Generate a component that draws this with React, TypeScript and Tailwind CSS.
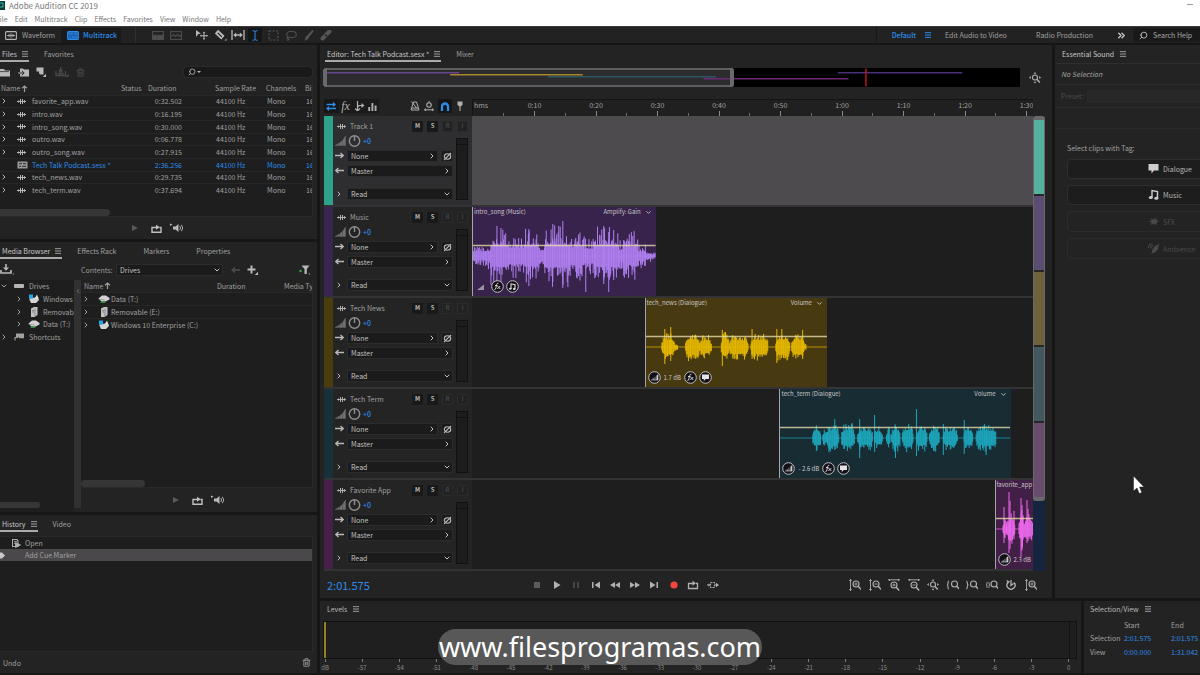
import type { ReactNode } from "react"
import { ChevronDown, ChevronLeft, ChevronRight, ChevronsRight, Menu, Search, Trash2 } from "lucide-react"

const SESSION = 156.256
const VIEW = 91.042
const PLAYHEAD = 121.575

const menus = ["File", "Edit", "Multitrack", "Clip", "Effects", "Favorites", "View", "Window", "Help"]

const files = [
  { name: "favorite_app.wav", duration: "0:32.502" },
  { name: "intro.wav", duration: "0:16.195" },
  { name: "intro_song.wav", duration: "0:30.000" },
  { name: "outro.wav", duration: "0:06.778" },
  { name: "outro_song.wav", duration: "0:27.915" },
  { name: "Tech Talk Podcast.sesx *", duration: "2:36.256", session: true },
  { name: "tech_news.wav", duration: "0:29.735" },
  { name: "tech_term.wav", duration: "0:37.694" },
]

type Burst = [start: number, end: number, amp: number]

type Clip = {
  name: string
  start: number
  length: number
  envelope: string
  gain?: string
  kind: "music" | "dialogue"
  bg: string
  wave: string
  width: number
  seed: number
  bursts: Burst[]
  spikes: [x: number, up: number, down: number][]
}

type Track = { name: string; strip: string; selected?: boolean; clip?: Clip }

const tracks: Track[] = [
  { name: "Track 1", strip: "bg-[#2fa38a]", selected: true },
  {
    name: "Music",
    strip: "bg-[#3a2450]",
    clip: {
      name: "intro_song (Music)",
      start: 0,
      length: 29.8,
      envelope: "Amplify: Gain",
      kind: "music",
      bg: "bg-[#37234b]",
      wave: "#b07ff0",
      width: 183,
      seed: 7,
      bursts: [
        [0, 12, 11], [12, 18, 14], [18, 36, 29], [36, 52, 23], [52, 66, 29], [66, 72, 15], [72, 96, 31],
        [96, 112, 25], [112, 122, 20], [122, 146, 30], [146, 151, 16], [151, 165, 25], [165, 173, 13],
        [173, 179, 7], [179, 183, 4],
      ],
      spikes: [[24, 30, 30], [28, 28, 34], [56, 27, 30], [80, 32, 26], [90, 35, 32], [113, 12, 36], [131, 30, 28], [136, 24, 36], [141, 26, 24]],
    },
  },
  {
    name: "Tech News",
    strip: "bg-[#4b3c0e]",
    clip: {
      name: "tech_news (Dialogue)",
      start: 28,
      length: 29.6,
      envelope: "Volume",
      gain: "1.7 dB",
      kind: "dialogue",
      bg: "bg-[#473a10]",
      wave: "#e6b800",
      width: 183,
      seed: 11,
      bursts: [[16, 29, 14], [29, 32, 6], [40, 54, 15], [54, 66, 12], [76, 84, 16], [84, 103, 13], [106, 123, 14], [131, 145, 15], [147, 160, 14], [160, 162, 5]],
      spikes: [[19, 18, 17], [25, 20, 14], [77, 17, 19], [107, 18, 12], [132, 18, 16], [137, 18, 10], [158, 17, 12]],
    },
  },
  {
    name: "Tech Term",
    strip: "bg-[#17303a]",
    clip: {
      name: "tech_term (Dialogue)",
      start: 49.9,
      length: 37.5,
      envelope: "Volume",
      gain: "- 2.6 dB",
      kind: "dialogue",
      bg: "bg-[#182c34]",
      wave: "#1ea8bd",
      width: 231,
      seed: 23,
      bursts: [
        [33, 41, 14], [43, 47, 12], [47, 59, 15], [62, 75, 15], [78, 93, 13], [95, 103, 12], [107, 111, 14],
        [112, 121, 15], [123, 134, 15], [137, 148, 14], [150, 160, 14], [164, 178, 13], [185, 194, 14], [197, 217, 14],
      ],
      spikes: [[55, 19, 12], [80, 19, 20], [95, 23, 14], [116, 12, 20], [137, 29, 18], [164, 14, 17], [185, 18, 16], [207, 12, 17]],
    },
  },
  {
    name: "Favorite App",
    strip: "bg-[#47204a]",
    clip: {
      name: "favorite_app",
      start: 84.8,
      length: 32.502,
      envelope: "",
      gain: "2.3 dB",
      kind: "dialogue",
      bg: "bg-[#421f47]",
      wave: "#ea68ea",
      width: 200,
      seed: 5,
      bursts: [[7, 11, 14], [11, 19, 16], [23, 28, 22], [28, 38, 15], [42, 60, 16], [66, 90, 14]],
      spikes: [[8, 22, 14], [13, 37, 24], [14, 28, 20], [18, 18, 10], [25, 31, 28], [26, 24, 20], [31, 29, 14], [32, 20, 12]],
    },
  },
]

const overview = [
  { start: 0, length: 30, y: 4, color: "#64478c" },
  { start: 28, length: 29.735, y: 6, color: "#a8872a" },
  { start: 49.9, length: 37.694, y: 8, color: "#2c5662" },
  { start: 84.8, length: 32.502, y: 10, color: "#6c2a74" },
  { start: 114.9, length: 27.915, y: 4, color: "#4a2f7c" },
]

// Small deterministic generator so that a clip always draws the same peaks
function random(seed: number) {
  let s = seed * 7919
  return () => {
    s = (s * 16807) % 2147483647
    return s / 2147483647
  }
}

function wavePath(clip: Clip) {
  const next = random(clip.seed)
  const core = clip.kind === "music" ? 0.36 : 0.5
  const power = clip.kind === "music" ? 3 : 2.2
  let d = ""
  for (const [from, to, amp] of clip.bursts) {
    for (let x = from; x < to; x += 0.7) {
      const edge = clip.kind === "dialogue" ? Math.min(1, 0.45 + Math.min(x - from, to - x) / 4) : 1
      const up = amp * edge * (core + (1 - core) * next() ** power)
      const down = amp * edge * (core + (1 - core) * next() ** power)
      d += `M${x.toFixed(1)} ${(49 - up).toFixed(1)}V${(49 + down).toFixed(1)}`
    }
  }
  for (const [x, up, down] of clip.spikes) d += `M${x} ${49 - up}V${49 + down}`
  return d
}

function Icon({ w = 12, h = 12, className = "", children }: { w?: number; h?: number; className?: string; children: ReactNode }) {
  return (
    <svg
      width={w}
      height={h}
      viewBox={`0 0 ${w} ${h}`}
      fill="none"
      stroke="currentColor"
      strokeWidth="1.1"
      className={`shrink-0 ${className}`}
      aria-hidden="true"
    >
      {children}
    </svg>
  )
}

function WaveIcon({ className = "" }: { className?: string }) {
  return (
    <Icon w={9} h={7} className={className}>
      <path d="M0 3.5h9M1.5 2.5v2M3.5 1v5M5.5 1v5M7.5 2.2v2.6" strokeWidth="1" />
    </Icon>
  )
}

function PanelMenu({ className = "" }: { className?: string }) {
  return (
    <button aria-label="Panel menu" className={className}>
      <Menu size={8} strokeWidth={3} />
    </button>
  )
}

function Tabs({ active, others = [] }: { active: string; others?: string[] }) {
  return (
    <div className="flex h-[17px] gap-[15px]">
      <div className="flex items-center gap-1 border-b-2 border-[#a9aaa9] pt-[2px] text-[#c8c8c8]">
        <button className="pl-[2px]">{active}</button>
        <PanelMenu className="text-[#9a9a9a]" />
      </div>
      <div className="flex gap-[27px]">
        {others.map((name) => (
          <button key={name}>{name}</button>
        ))}
      </div>
    </div>
  )
}

function PreviewControls({ className = "" }: { className?: string }) {
  return (
    <div className={`flex items-center ${className}`}>
      <button aria-label="Play" className="text-[#5a5a5a]">
        <Icon w={8} h={8}>
          <path d="M1 1l6 3-6 3z" fill="currentColor" stroke="none" />
        </Icon>
      </button>
      <button aria-label="Loop playback" className="ml-3 text-[#c0c0c0]">
        <LoopIcon />
      </button>
      <button aria-label="Auto-play" className="ml-2 text-[#b8b8b8]">
        <Icon w={14} h={10}>
          <path d="M3 3.5h2.5L8.5 1v8L5.5 6.5H3z" fill="currentColor" stroke="none" />
          <path d="M9.8 3q1.6 2 0 4M11.4 1.8q2.6 3.2 0 6.4" strokeWidth="0.9" />
          <path d="M0 0.5l2.5 1L0 3z" fill="currentColor" stroke="none" />
        </Icon>
      </button>
    </div>
  )
}

function LoopIcon() {
  return (
    <Icon w={11} h={9}>
      <path d="M2.5 3.5H1v4.8h9V3.5H8.5M2 3.5h4" strokeWidth="1.4" />
      <path d="M5 0.8l3.8 2.5L5 5.8z" fill="currentColor" stroke="none" />
    </Icon>
  )
}

function TitleBar() {
  return (
    <header className="overflow-hidden bg-white text-[#777777]">
      <div className="flex h-[11px] items-center text-[8px]">
        <Icon w={5} h={9}>
          <rect width="5" height="9" fill="#0d3b38" stroke="none" />
          <path d="M0 2h3v4H0" stroke="#2fb39c" />
        </Icon>
        <h1 className="ml-1 leading-[11px]">Adobe Audition CC 2019</h1>
        <button aria-label="Minimize" className="mr-[7px] ml-auto h-[3px] w-[6px] border-t border-[#9a9a9a]" />
      </div>
      <nav className="-ml-1 flex h-[15px] items-center gap-[7px]">
        {menus.map((m) => (
          <button key={m}>{m}</button>
        ))}
      </nav>
    </header>
  )
}

function Toolbar() {
  return (
    <div className="flex h-[17px] items-center overflow-hidden border-t border-[#3a3a3a] bg-[#222222]">
      <button className="ml-[5px] flex w-[56px] items-center gap-[5px]">
        <Icon w={12} h={9} className="text-[#b5b5b5]">
          <rect x="0.6" y="0.6" width="10.8" height="7.8" rx="1" />
          <path d="M2 4.5h8M4 3v3M6 2.2v4.6M8 3v3" strokeWidth="0.9" />
        </Icon>
        Waveform
      </button>
      <button className="flex h-[15px] w-[60px] items-center gap-[4px] bg-[#1a1a1a] pl-[6px] font-medium text-[#2d8ceb]">
        <Icon w={12} h={9}>
          <rect x="0.6" y="0.6" width="10.8" height="7.8" rx="1" fill="#1c5fa8" />
          <path d="M2 3h4M7 3h3M2 6h2M5 6h5" />
        </Icon>
        Multitrack
      </button>
      <div className="ml-[14px] h-full w-px bg-[#303030]" />
      <div className="ml-4 flex items-center gap-[6px] text-[#4d4d4d]">
        <button aria-label="Show spectral frequency display">
          <Icon w={12} h={9}>
            <rect x="0.6" y="0.6" width="10.8" height="7.8" />
            <path d="M1 5l2-1 2 1 2-1 2 1 2-1v4H1z" fill="currentColor" />
          </Icon>
        </button>
        <button aria-label="Show spectral pitch display">
          <Icon w={12} h={9}>
            <rect x="0.6" y="0.6" width="10.8" height="7.8" />
            <path d="M1.5 5.5l2-2 2 2 2-2 2 2 1.5-1.5" />
          </Icon>
        </button>
      </div>
      <div className="ml-[13px] flex items-center text-[#b8b8b8]">
        <button aria-label="Move tool">
          <Icon w={13} h={12}>
            <path d="M1 1l5 3.8-2.7.3L1 8z" fill="currentColor" stroke="none" />
            <path d="M9 3.5v6.5M5.8 6.8h6.4" strokeWidth="1" />
            <path d="M9 2.5l1.3 1.5H7.7zM9 11l1.3-1.5H7.7zM4.8 6.8l1.5-1.3v2.6zM13 6.8l-1.5-1.3v2.6z" fill="currentColor" stroke="none" />
          </Icon>
        </button>
        <button aria-label="Razor selected clips tool" className="ml-[6px]">
          <Icon w={13} h={12}>
            <path d="M4 0.8l6.5 6-3.2 3.6-6.5-6z" fill="currentColor" stroke="none" />
            <path d="M3.8 4l4 3.8" stroke="#222222" />
            <path d="M12.5 9.5v2h-2z" fill="currentColor" stroke="none" />
          </Icon>
        </button>
        <button aria-label="Slip tool" className="ml-[4px]">
          <Icon w={14} h={12}>
            <path d="M1 1v10M13 1v10M4 6h6" strokeWidth="1.3" />
            <path d="M2.2 6l3-2.5v5zM11.8 6l-3-2.5v5z" fill="currentColor" stroke="none" />
          </Icon>
        </button>
        <button aria-label="Time selection tool" className="ml-[3px] flex h-[14px] w-[14px] items-center justify-center bg-[#161616] text-[#2d8ceb]">
          <Icon w={6} h={11}>
            <path d="M0.5 0.8H2L3 1.6 4 0.8h1.5M0.5 10.2H2L3 9.4l1 .8h1.5M3 1.5v8" strokeWidth="1" />
          </Icon>
        </button>
      </div>
      <div className="ml-[6px] flex items-center gap-[6px] text-[#555555]">
        <button aria-label="Marquee selection tool">
          <Icon w={11} h={11}>
            <rect x="1" y="1" width="9" height="9" strokeDasharray="2 1.5" />
          </Icon>
        </button>
        <button aria-label="Lasso selection tool">
          <Icon w={12} h={11}>
            <ellipse cx="6.5" cy="4.5" rx="4.8" ry="3.3" />
            <path d="M3 6.8q-1.8 1 0 2t-1 1.5" />
          </Icon>
        </button>
        <button aria-label="Paintbrush selection tool">
          <Icon w={11} h={11}>
            <path d="M10 0.5L5 6.5" strokeWidth="2" />
            <path d="M4.5 5.5l1.8 1.6q-.8 3-5.3 3.4 1.5-1 1.5-3t2-2z" fill="currentColor" stroke="none" />
          </Icon>
        </button>
        <button aria-label="Spot healing brush tool">
          <Icon w={12} h={11}>
            <path d="M9.5 1.5l-7 7" strokeWidth="4" strokeLinecap="round" />
            <path d="M5 4.5l2 2" stroke="#222222" />
          </Icon>
        </button>
      </div>
      <div className="ml-auto h-full w-px bg-[#181818]" />
      <button className="ml-[15px] font-medium text-[#2d8ceb]">Default</button>
      <PanelMenu className="ml-[8px] w-[9px] text-[#2d8ceb]" />
      <button className="ml-[12px] w-[63px] whitespace-nowrap text-left">Edit Audio to Video</button>
      <button className="ml-[28px] w-[58px] whitespace-nowrap text-left">Radio Production</button>
      <button aria-label="More workspaces" className="ml-[22px] text-[#c8c8c8]">
        <ChevronsRight size={11} strokeWidth={3} />
      </button>
      <label className="ml-[6px] flex h-[14px] w-[67px] items-center gap-[5px] border border-[#1c1c1c] bg-[#191919] pl-[5px] text-[#b8b8b8]">
        <Search size={9} strokeWidth={2.5} className="shrink-0 -scale-x-100" />
        <input aria-label="Search Help" placeholder="Search Help" className="w-full min-w-0 bg-transparent outline-none placeholder:text-[#a8a8a8]" />
      </label>
    </div>
  )
}

function FilesPanel() {
  return (
    <section className="flex h-[194px] flex-col bg-[#232323]">
      <Tabs active="Files" others={["Favorites"]} />
      <div className="flex h-5 items-center text-[#b8b8b8]">
        <button aria-label="Open file">
          <Icon w={11} h={9}>
            <path d="M0 1h4l1 1.5h5V8.5H0z" fill="currentColor" stroke="none" />
            <path d="M0 3.6h9" stroke="#232323" strokeWidth="0.7" />
          </Icon>
        </button>
        <button aria-label="Import file" className="ml-[7px]">
          <Icon w={12} h={9}>
            <path d="M2 0.5h3l1 1h5v7H2z" fill="currentColor" stroke="none" />
            <path d="M0 5h5.5M3.8 2.8L6.2 5 3.8 7.2" stroke="#232323" strokeWidth="1" />
            <path d="M0 5h2" />
          </Icon>
        </button>
        <button aria-label="New file" className="ml-[6px]">
          <Icon w={12} h={10}>
            <path d="M0.5 0.5h7v7h-3L3 6.5V4.5H0.5z" fill="currentColor" stroke="none" />
            <path d="M9.5 8v1.5H8z" fill="currentColor" />
          </Icon>
        </button>
        <button aria-label="Insert into multitrack session" className="ml-[7px] text-[#4a4a4a]">
          <Icon w={14} h={10}>
            <path d="M1 4v4.5h9.5V4M5.7 0v4M3.7 2.8l2 2.2 2-2.2M3 6.5h5.5" strokeWidth="1.3" />
            <path d="M13 8v1.5h-1.5z" fill="currentColor" />
          </Icon>
        </button>
        <button aria-label="Close selected files" className="ml-[7px] text-[#454545]">
          <Trash2 size={9} strokeWidth={3} />
        </button>
        <label className="mr-1 ml-auto flex h-3 w-[130px] items-center rounded-sm border border-[#2a2a2a] bg-[#191919] pl-1 text-[#b8b8b8]">
          <Search size={8} strokeWidth={2.5} className="shrink-0 -scale-x-100" />
          <span className="ml-[1px] h-0 w-0 border-x-2 border-t-2 border-x-transparent border-t-[#b8b8b8]" />
          <input aria-label="Search files" className="w-full min-w-0 bg-transparent outline-none" />
        </label>
      </div>
      <div className="mr-1 flex flex-1 flex-col overflow-hidden border-r border-b border-[#2a2a2a] bg-[#1e1e1e]">
        <table className="h-[114px] w-full table-fixed border-collapse text-left whitespace-nowrap">
          <colgroup>
            <col />
            <col className="w-[27px]" />
            <col className="w-[67px]" />
            <col className="w-[51px]" />
            <col className="w-[39px]" />
            <col className="w-[7px]" />
          </colgroup>
          <thead className="bg-[#222222]">
            <tr className="h-[13px]">
              <th className="p-0 font-normal">
                <span className="flex items-center pl-px">
                  Name
                  <SortArrow />
                </span>
              </th>
              <th className="p-0 font-normal">Status</th>
              <th className="p-0 font-normal">Duration</th>
              <th className="p-0 font-normal">Sample Rate</th>
              <th className="p-0 font-normal">Channels</th>
              <th className="overflow-hidden p-0 font-normal">Bit</th>
            </tr>
          </thead>
          <tbody>
            {files.map((f) => (
              <tr key={f.name} className={f.session ? "border-t border-[#272727] text-[#2d8ceb]" : "border-t border-[#272727]"}>
                <td className="p-0">
                  <span className="flex items-center">
                    <span className="w-[17px]">
                      {!f.session && <ChevronRight size={8} strokeWidth={3} className="text-[#b8b8b8]" />}
                    </span>
                    <span className="w-[15px]">{f.session ? <SessionIcon /> : <WaveIcon className="text-[#b8b8b8]" />}</span>
                    {f.name}
                  </span>
                </td>
                <td className="p-0" />
                <td className="p-0 pr-[33px] text-right">{f.duration}</td>
                <td className="p-0 pl-px">44100 Hz</td>
                <td className="p-0 pl-px">Mono</td>
                <td className="overflow-hidden p-0 pl-px">16</td>
              </tr>
            ))}
          </tbody>
        </table>
        <div className="mt-auto h-[7px] w-[110px] rounded-r-full bg-[#363636]" />
      </div>
      <PreviewControls className="h-[22px] pl-[131px]" />
    </section>
  )
}

function SortArrow() {
  return (
    <Icon w={7} h={7} className="ml-[1px]">
      <path d="M3.5 7V1.5M1 3.2L3.5 1 6 3.2" strokeWidth="1.2" />
    </Icon>
  )
}

function SessionIcon() {
  return (
    <Icon w={11} h={8} className="text-[#9a9a9a]">
      <rect x="0.5" y="0.5" width="10" height="7" rx="0.5" fill="currentColor" stroke="none" />
      <path d="M2 2.7h3M6 2.7h3M2 5.3h2M5 5.3h4" stroke="#1e1e1e" strokeWidth="0.9" />
    </Icon>
  )
}

function DriveIcon({ kind }: { kind: string }) {
  if (kind === "windows") {
    return (
      <Icon w={12} h={9}>
        <path d="M1 4.5l9-1.5 1 3-3 3H3z" fill="#d5d5d5" stroke="none" />
        <path d="M1 0.5h4v4H1z" fill="#22a7e8" stroke="none" />
        <path d="M7 4l2-3.5 1.5 4" fill="#e8e8e8" stroke="none" />
      </Icon>
    )
  }
  if (kind === "removable") {
    return (
      <Icon w={12} h={10}>
        <path d="M3 1.5L6 0h3.5v8L6.5 10H3z" fill="#c4c4c4" stroke="none" />
        <path d="M4 3.5h2M4 5h2M7 1.5v8" stroke="#777777" strokeWidth="0.8" />
      </Icon>
    )
  }
  return (
    <Icon w={12} h={8}>
      <path d="M0.5 3.5L4 0.5h4L11.5 3v1.5L7.5 6.5h-4z" fill="#d2d2d2" stroke="none" />
      <path d="M2.5 7.2h5" stroke="#3da24a" strokeWidth="1.2" />
      <path d="M0.5 4.2l6 .6" stroke="#8a8a8a" strokeWidth="0.7" />
    </Icon>
  )
}

const tree = [
  { name: "Windows 10 Enterprise (C:)", kind: "windows" },
  { name: "Removable (E:)", kind: "removable" },
  { name: "Data (T:)", kind: "data" },
]

function MediaBrowser() {
  return (
    <section className="flex h-[270px] flex-col bg-[#232323]">
      <Tabs active="Media Browser" others={["Effects Rack", "Markers", "Properties"]} />
      <div className="flex h-[21px] items-center text-[#b8b8b8]">
        <button aria-label="Import from drive">
          <Icon w={15} h={11}>
            <path d="M6 0v4.5" strokeWidth="1.6" />
            <path d="M3 3.5h6L6 6.8z" fill="currentColor" stroke="none" />
            <path d="M1 6v3h10V6" strokeWidth="1.7" />
            <path d="M14 9v1.5h-1.5z" fill="currentColor" stroke="none" />
          </Icon>
        </button>
        <label className="ml-[66px] flex items-center text-[#9a9a9a]">
          <span className="w-[35px]">Contents:</span>
          <Dropdown label="Contents" value="Drives" className="w-[107px]" />
        </label>
        <button aria-label="Back" className="ml-[8px] text-[#4a4a4a]">
          <Icon w={9} h={8}>
            <path d="M2 4h7" strokeWidth="1.8" />
            <path d="M0 4l4-3.5v7z" fill="currentColor" stroke="none" />
          </Icon>
        </button>
        <button aria-label="Add shortcut" className="ml-[7px]">
          <Icon w={12} h={10}>
            <path d="M4.5 0.5v8M0.5 4.5h8" strokeWidth="2" />
            <path d="M10.5 8v1.5H9z" fill="currentColor" />
          </Icon>
        </button>
        <button aria-label="Filter" className="mr-[6px] ml-auto">
          <Icon w={12} h={10}>
            <path d="M2.5 0.5h8L7.8 4v5H5.5V4z" fill="currentColor" stroke="none" />
            <circle cx="1.5" cy="6" r="1.3" fill="#32a243" stroke="none" />
            <path d="M11 8v1.5H9.5z" fill="currentColor" stroke="none" />
          </Icon>
        </button>
      </div>
      <div className="flex flex-1">
        <div className="flex w-[74px] flex-col overflow-hidden bg-[#1e1e1e] whitespace-nowrap">
          <ul className="flex h-[63px] flex-col justify-between">
            <li className="flex h-3 items-center">
              <ChevronDown size={8} strokeWidth={3} className="mr-[6px]" />
              <span className="mr-[5px] h-1 w-[10px] shrink-0 rounded-[1px] bg-[#b5b5b5]" />
              Drives
            </li>
            {tree.map((d) => (
              <li key={d.name} className="flex h-3 items-center pl-[15px]">
                <ChevronRight size={8} strokeWidth={3} className="mr-[5px] shrink-0" />
                <span className="mr-[3px] flex">
                  <DriveIcon kind={d.kind} />
                </span>
                {d.name}
              </li>
            ))}
            <li className="flex h-3 items-center">
              <ChevronRight size={8} strokeWidth={3} className="mr-[6px]" />
              <Icon w={10} h={8} className="mr-[5px]">
                <path d="M2 0.5h8v4.8H5v-1H2z" fill="currentColor" stroke="none" />
                <path d="M1 7.5V4.5h3" />
              </Icon>
              Shortcuts
            </li>
          </ul>
          <div className="mt-auto mb-1 h-[6px] w-10 rounded-r-full bg-[#363636]" />
        </div>
        <div className="mb-1 flex w-[7px] flex-col items-center bg-[#313131] pt-2 text-[#8a8a8a]">
          <ChevronLeft size={6} strokeWidth={3} />
        </div>
        <div className="mr-1 flex flex-1 flex-col">
          <div className="flex flex-1 flex-col overflow-hidden border-r border-b border-[#2a2a2a] bg-[#1e1e1e]">
            <table className="w-full table-fixed border-collapse text-left whitespace-nowrap">
              <colgroup>
                <col />
                <col className="w-[67px]" />
                <col className="w-[28px]" />
              </colgroup>
              <thead className="bg-[#222222]">
                <tr className="h-3">
                  <th className="p-0 pl-[3px] font-normal">
                    <span className="flex items-center">
                      Name
                      <SortArrow />
                    </span>
                  </th>
                  <th className="p-0 font-normal">Duration</th>
                  <th className="overflow-hidden p-0 font-normal">Media Type</th>
                </tr>
              </thead>
              <tbody>
                {[...tree].sort((a, b) => a.name.localeCompare(b.name)).map((d) => (
                  <tr key={d.name} className="h-[13px] border-t border-[#272727]">
                    <td className="p-0" colSpan={3}>
                      <span className="flex h-[11px] items-center">
                        <ChevronRight size={8} strokeWidth={3} className="mr-2 ml-[1px]" />
                        <span className="mr-px flex">
                          <DriveIcon kind={d.kind} />
                        </span>
                        {d.name}
                      </span>
                    </td>
                  </tr>
                ))}
              </tbody>
            </table>
            <div className="mt-auto h-[7px] w-16 rounded-full bg-[#363636]" />
          </div>
          <PreviewControls className="h-[24px] pl-[91px]" />
        </div>
      </div>
    </section>
  )
}

function HistoryPanel() {
  return (
    <section className="flex flex-1 flex-col bg-[#232323]">
      <Tabs active="History" others={["Video"]} />
      <ul className="mt-[4px] mr-1 flex-1 border border-l-0 border-[#2a2a2a] bg-[#1e1e1e]">
        <li className="flex h-3 items-center">
          <Icon w={9} h={9} className="mr-[4px] ml-3 text-[#b0b0b0]">
            <path d="M0.5 0.5h4.5l1 1.5v5.5H0.5z" />
            <path d="M2 2.5h3M2 4.5h2M3.5 3.5l5 2.5-5 2.5z" fill="currentColor" strokeWidth="0.8" />
          </Icon>
          Open
        </li>
        <li className="flex h-3 items-center bg-[#4a484b]">
          <Icon w={5} h={7} className="mr-5 text-[#c8c8c8]">
            <path d="M0 0.5h2l3 3-3 3H0z" fill="currentColor" stroke="none" />
          </Icon>
          Add Cue Marker
        </li>
      </ul>
      <div className="flex h-[21px] items-center justify-between pr-[6px] pl-[3px]">
        <span>Undo</span>
        <button aria-label="Delete history" className="text-[#8a8a8a]">
          <Trash2 size={9} strokeWidth={3} />
        </button>
      </div>
    </section>
  )
}

function Dropdown({ label, value, side, className }: { label: string; value: string; side?: boolean; className?: string }) {
  return (
    <span className={`relative flex h-3 items-center border border-[#2b2b2b] bg-[#1b1b1b] text-[#c0c0c0] ${className}`}>
      <select aria-label={label} className="h-full w-full appearance-none bg-transparent pl-[3px] leading-[10px] outline-none">
        <option>{value}</option>
      </select>
      <span className="pointer-events-none absolute right-px">
        {side ? <ChevronRight size={8} strokeWidth={3} /> : <ChevronDown size={8} strokeWidth={3} />}
      </span>
    </span>
  )
}

function TrackHeader({ track }: { track: Track }) {
  return (
    <div className={`flex w-[148px] shrink-0 ${track.selected ? "bg-[#2e2e30]" : "bg-[#242424]"}`}>
      <div className={`w-[9px] shrink-0 ${track.strip}`} />
      <div className="flex flex-1 flex-col pt-1 pr-1 pl-[2px]">
        <div className="flex h-3 items-center">
          <WaveIcon className="ml-[2px] text-[#b0b0b0]" />
          <span className="ml-1 flex-1 whitespace-nowrap">{track.name}</span>
          <div className="flex gap-1 text-[6px] font-bold">
            {["M", "S", "R", "I"].map((b, i) => (
              <button
                key={b}
                className={
                  i < 2
                    ? "flex h-[11px] w-[11px] items-center justify-center rounded-[1px] bg-[#191919] text-[#bcbcbc]"
                    : "flex h-[11px] w-[11px] items-center justify-center rounded-[1px] border border-[#2b2b2b] bg-[#222222] text-[#434343]"
                }
              >
                {b}
              </button>
            ))}
          </div>
        </div>
        <div className="flex pt-[3px]">
          <div className="flex flex-1 flex-col gap-[3px]">
            <div className="flex h-3 items-center">
              <Icon w={11} h={10} className="text-[#707070]">
                <path d="M0 9.5L2 8.5v1zM2.5 9.5V8l2-1v2.5zM5 9.5V6.5l2-1.5v4.5zM7.5 9.5V4.5L10.5 0v9.5z" fill="currentColor" strokeWidth="0.4" />
              </Icon>
              <Icon w={13} h={12} className="ml-[2px] text-[#8f8f8f]">
                <circle cx="6.5" cy="6" r="5.2" strokeWidth="1.4" />
                <path d="M6.5 1v5" strokeWidth="1.4" />
              </Icon>
              <span className="ml-[2px] font-medium text-[#2d8ceb]">+0</span>
            </div>
            <div className="flex items-center text-[#b8b8b8]">
              <Icon w={9} h={8} className="mr-[3px]">
                <path d="M0 3.5h8M5.5 1L8.3 3.5 5.5 6" strokeWidth="1.3" />
              </Icon>
              <Dropdown label={`${track.name} input`} value="None" side className="flex-1" />
              <button aria-label="Reverse polarity" className="ml-[3px] flex h-3 w-3 items-center justify-center border border-[#2b2b2b] bg-[#1b1b1b]">
                <Icon w={9} h={9}>
                  <ellipse cx="4.5" cy="4.5" rx="3.2" ry="2.7" />
                  <path d="M1 8l7-7" />
                </Icon>
              </button>
            </div>
            <div className="flex items-center text-[#b8b8b8]">
              <Icon w={9} h={8} className="mr-[3px]">
                <path d="M9 3.5H1M3.5 1L0.7 3.5 3.5 6" strokeWidth="1.3" />
              </Icon>
              <Dropdown label={`${track.name} output`} value="Master" side className="flex-1" />
            </div>
            <div className="mt-2 flex items-center text-[#b8b8b8]">
              <button aria-label="Show automation lanes" className="mr-1 w-2">
                <ChevronRight size={8} strokeWidth={3} />
              </button>
              <Dropdown label={`${track.name} automation mode`} value="Read" className="flex-1" />
            </div>
          </div>
          <div className="mt-[3px] ml-[3px] w-[12px] border border-[#111111] bg-[#1d1d1d]">
            <div className="h-[6px] border-b border-[#111111]" />
          </div>
        </div>
      </div>
    </div>
  )
}

function Badge({ children }: { children: ReactNode }) {
  return (
    <svg width="13" height="13" viewBox="0 0 13 13" fill="none" stroke="#e4e4e4" className="shrink-0" aria-hidden="true">
      <circle cx="6.5" cy="6.5" r="5.8" fill="#141018" stroke="#c0bfc2" />
      {children}
    </svg>
  )
}

const LEVELS = "M3 9h7V3.5L8.8 4.8v4M7 5.8v3M5.2 7v2"

function ClipView({ clip }: { clip: Clip }) {
  return (
    <div
      className={`absolute inset-y-0 overflow-hidden border-l border-[#a7a3a8] text-[6px] text-[#c9c6c6] ${clip.bg}`}
      style={{ left: `${(clip.start / VIEW) * 100}%`, width: `${(clip.length / VIEW) * 100}%` }}
    >
      <svg viewBox={`0 0 ${clip.width} 89`} preserveAspectRatio="none" className="absolute inset-y-0 left-0 h-full" style={{ width: clip.envelope ? "100%" : clip.width }}>
        <path d={`M0 49H${clip.width}`} stroke={clip.wave} strokeOpacity="0.7" />
        <path d={wavePath(clip)} stroke={clip.wave} />
        <path d={`M0 38.5H${clip.width}`} stroke="#e6dba8" strokeOpacity="0.8" strokeWidth="1.3" />
      </svg>
      <div className="relative flex h-full flex-col justify-between">
        <div className="flex h-[10px] items-center pl-px whitespace-nowrap">
          <span>{clip.name}</span>
          {clip.envelope && (
            <button className="mr-1 ml-auto flex items-center gap-1">
              {clip.envelope}
              <ChevronDown size={7} strokeWidth={3} />
            </button>
          )}
        </div>
        <div className="mb-[3px] ml-[2px] flex items-center gap-[2px] whitespace-nowrap">
          {clip.gain ? (
            <>
              <Badge>
                <path d={LEVELS} fill="#bbb" strokeWidth="0.6" />
              </Badge>
              <span className="mx-px">{clip.gain}</span>
            </>
          ) : (
            <Icon w={11} h={8} className="mr-[3px] text-[#9d92a8]">
              <path d="M2 7h7V1.5z" fill="currentColor" stroke="none" />
            </Icon>
          )}
          {clip.envelope && (
            <>
              <Badge>
                <path d="M3.5 9.5q1 .3 1.4-1.5l.8-3.5q.4-1.5 1.6-1.2M4 5.5h2.5M6.5 6l2.8 3M9.3 6L6.3 9" strokeWidth="0.9" />
              </Badge>
              <Badge>
                {clip.kind === "music" ? (
                  <>
                    <path d="M5 8.8V3.8l4 .8v4.3" strokeWidth="1.1" />
                    <ellipse cx="4.3" cy="8.8" rx="1.3" ry="1" fill="#e4e4e4" stroke="none" />
                    <ellipse cx="8.2" cy="9" rx="1.3" ry="1" fill="#e4e4e4" stroke="none" />
                  </>
                ) : (
                  <path d="M3 3.5h7v4.5H6.8L4.8 10V8H3z" fill="#e4e4e4" stroke="none" />
                )}
              </Badge>
            </>
          )}
        </div>
      </div>
    </div>
  )
}

function Overview() {
  return (
    <div className="flex items-center">
      <div className="relative ml-[3px] h-[19px] flex-1 bg-black">
        <div
          className="absolute inset-y-0 left-0 rounded-[3px] border-2 border-[#5e5e61] bg-[#2c2b2e]"
          style={{ width: `${((VIEW + 1) / SESSION) * 100}%` }}
        />
        <svg viewBox={`0 0 ${SESSION} 19`} preserveAspectRatio="none" className="absolute inset-0 h-full w-full">
          {overview.map((o) => (
            <rect key={o.start} x={o.start + 0.5} y={o.y} width={o.length} height="1.5" fill={o.color} />
          ))}
          <rect x={PLAYHEAD} y="0.5" width="0.3" height="18" fill="#d01818" />
        </svg>
        <div
          className="absolute inset-y-0 left-0 rounded-[3px] border-x-4 border-[#69696c]"
          style={{ width: `${((VIEW + 1) / SESSION) * 100}%` }}
        />
      </div>
      <button aria-label="Zoom out full" className="mr-[11px] ml-[9px] text-[#b0b0b0]">
        <ZoomFullIcon />
      </button>
    </div>
  )
}

function ZoomFullIcon() {
  return (
    <Icon>
      <circle cx="6" cy="5.5" r="2.5" />
      <path d="M7.8 7.3l3 3.2" strokeWidth="1.5" />
      <path d="M6 0l1.4 1.7H4.6zM6 11.5L4.6 9.8h2.8zM0 5.5l1.8-1.4v2.8zM12 5.5l-1.8-1.4v2.8z" fill="currentColor" stroke="none" />
    </Icon>
  )
}

function TrackTools() {
  return (
    <div className="flex w-[148px] shrink-0 items-center text-[#b0b0b0]">
      <div className="mb-[3px] flex h-[14px] items-center bg-[#1b1b1b]">
        <button aria-label="Inputs and outputs" className="flex h-full w-[14px] items-center justify-center bg-[#161616] text-[#2d8ceb]">
          <Icon w={10} h={9}>
            <path d="M0.5 2.5h8M10 6.5H2" strokeWidth="1.3" />
            <path d="M7 0l3 2.5L7 5zM3 4L0 6.5 3 9z" fill="currentColor" stroke="none" />
          </Icon>
        </button>
        <button aria-label="Effects" className="w-[15px] text-center font-['Liberation_Serif',serif] text-[12px] leading-3 italic">
          fx
        </button>
        <button aria-label="Sends" className="flex w-[13px] justify-center">
          <Icon w={10} h={10}>
            <path d="M2.5 0v10M2.5 6.5l1.5-2h4M0 7.5L2.5 10 5 7.5" strokeWidth="1.2" />
            <path d="M6.5 2l3 2.5-3 2.5z" fill="currentColor" stroke="none" />
          </Icon>
        </button>
        <button aria-label="EQ" className="flex w-[13px] justify-center">
          <Icon w={9} h={9}>
            <path d="M1.2 5v4M4.4 1v8M7.6 3.5V9" strokeWidth="1.9" />
          </Icon>
        </button>
      </div>
      <div className="mb-[3px] ml-auto flex items-center gap-[2px] pr-[6px]">
        <button aria-label="Metronome" className="w-3">
          <Icon w={10} h={10}>
            <path d="M3.5 1h3L9 9H1zM2 7h6M1.5 0.5l5 6.5" strokeWidth="1" />
          </Icon>
        </button>
        <button aria-label="Global clip stretching" className="w-3">
          <Icon w={10} h={10}>
            <circle cx="5" cy="4" r="2.2" />
            <path d="M5 0v1.5M0.5 8.8h9M2 7.5L0.5 8.8 2 10M8 7.5l1.5 1.3L8 10" strokeWidth="1" />
          </Icon>
        </button>
        <button aria-label="Snap" className="flex h-[14px] w-[14px] items-center justify-center bg-[#161616] text-[#2d8ceb]">
          <Icon w={10} h={9}>
            <path d="M2 9V4.5a3 3 0 0 1 6 0V9" strokeWidth="2.3" />
          </Icon>
        </button>
        <button aria-label="Add marker" className="flex w-3 justify-center">
          <Icon w={6} h={10}>
            <path d="M0.5 0.5h5V4L3.5 5.5h-1L0.5 4z" fill="currentColor" stroke="none" />
            <path d="M3 4v6" />
          </Icon>
        </button>
      </div>
    </div>
  )
}

const rulerMarks = Array.from({ length: 18 }, (_, i) => (i + 1) * 5)

function Ruler() {
  return (
    <div className="relative flex-1 overflow-hidden border-t border-l border-[#141414] bg-[#202020]">
      <span className="absolute top-0 left-[1px] leading-[11px]">hms</span>
      {rulerMarks.map((s) => (
        <div key={s} className="absolute inset-y-0 flex w-0 flex-col items-center justify-end" style={{ left: `${(s / VIEW) * 100}%` }}>
          {s % 10 === 0 && (
            <span className="mb-auto leading-[11px]">
              {Math.floor(s / 60)}:{String(s % 60).padStart(2, "0")}
            </span>
          )}
          <span className={s % 10 === 0 ? "h-[5px] w-px shrink-0 bg-[#8a8a8a]" : "h-[3px] w-px shrink-0 bg-[#6a6a6a]"} />
        </div>
      ))}
    </div>
  )
}

const navColors = ["bg-[#55b09d]", "bg-[#5a4d71]", "bg-[#6f613c]", "bg-[#43575f]", "bg-[#694c6d]"]

function TrackNavigator() {
  return (
    <div className="mr-[7px] flex w-[12px] flex-col bg-[#15243f]">
      <div className="flex h-[385px] flex-col gap-[2px] rounded-[3px] border-x border-y-4 border-[#69696c] bg-[#262626]">
        {navColors.map((c) => (
          <div key={c} className={`flex-1 ${c}`} />
        ))}
      </div>
    </div>
  )
}

function Lens({ x = 5, sign = "" }: { x?: number; sign?: string }) {
  return (
    <>
      <circle cx={x} cy="5" r="3" />
      <path d={`M${x + 2.2} 7.2l3 3.3`} strokeWidth="1.5" />
      {sign && <path d={sign === "+" ? `M${x - 1.5} 5h3M${x} 3.5v3` : `M${x - 1.5} 5h3`} strokeWidth="0.9" />}
    </>
  )
}

function Transport() {
  const rule = <path d="M1.5 0.5v11M0.3 2l1.2-1.5L2.7 2M0.3 10l1.2 1.5L2.7 10" strokeWidth="0.9" />
  const bar = <path d="M0 0.8h12M1.5 0v2M10.5 0v2" strokeWidth="0.9" />
  const transport: [string, ReactNode, string][] = [
    ["Stop", <path d="M3 3h6v6H3z" fill="currentColor" stroke="none" />, "text-[#5a5a5a]"],
    ["Play", <path d="M3 2l6.5 4L3 10z" fill="currentColor" stroke="none" />, ""],
    ["Pause", <path d="M4 3v6M8 3v6" strokeWidth="1.6" />, "text-[#505050]"],
    ["Move playhead to previous", <path d="M2 3h1.5v6H2zM10 2.5v7L4.5 6z" fill="currentColor" stroke="none" />, ""],
    ["Rewind", <path d="M6 3v6L1 6zM11 3v6L6 6z" fill="currentColor" stroke="none" />, ""],
    ["Fast forward", <path d="M1 3v6l5-3zM6 3v6l5-3z" fill="currentColor" stroke="none" />, ""],
    ["Move playhead to next", <path d="M8.5 3H10v6H8.5zM2 2.5v7L7.5 6z" fill="currentColor" stroke="none" />, ""],
    ["Record", <circle cx="6" cy="6" r="3.6" fill="currentColor" stroke="none" />, "text-[#f4473c]"],
    ["Loop playback", <><path d="M3 4.5H1.5v5h9v-5H9M3 4.5h3" strokeWidth="1.3" /><path d="M5.5 1.8L9 4.3 5.5 6.8z" fill="currentColor" stroke="none" /></>, ""],
    ["Skip selection", <><rect x="3.5" y="3.5" width="4" height="5" strokeDasharray="2 1" /><path d="M0 6h3M8 6h3" /><path d="M9 3.8L12 6 9 8.2zM1.5 4.5L3 6 1.5 7.5z" fill="currentColor" stroke="none" /></>, ""],
  ]
  const zoom: [string, ReactNode][] = [
    ["Zoom in amplitude", <>{rule}<Lens x={7} sign="+" /></>],
    ["Zoom out amplitude", <>{rule}<Lens x={7} sign="-" /></>],
    ["Zoom in time", <>{bar}<g transform="translate(1 1)"><Lens sign="+" /></g></>],
    ["Zoom out time", <>{bar}<g transform="translate(1 1)"><Lens sign="-" /></g></>],
    ["Zoom out full", <ZoomFullIcon />],
    ["Zoom in at in point", <><path d="M2 2Q1 2 1 4T0 6q1 0 1 2t1 2" /><Lens x={7.5} /></>],
    ["Zoom in at out point", <><path d="M0.3 2q1 0 1 2t1.2 2q-1.2 0-1.2 2t-1 2" /><Lens x={7.5} /></>],
    ["Zoom to selection", <><path d="M1.5 3Q1 3 1 4.5T0 6q1 0 1 1.5T1.5 9M2.5 3Q3 3 3 4.5T4 6Q3 6 3 7.5T2.5 9" strokeWidth="0.9" /><Lens x={8} /></>],
    ["Scroll to playhead", <><path d="M3 3.5a4 4 0 1 0 6 0M6 1v5.5l2.5-2" strokeWidth="1.3" /><path d="M1.5 1l3.5 1.5L2.5 5z" fill="currentColor" stroke="none" /></>],
    ["Zoom selected track", <>{rule}<Lens x={7} sign="+" /></>],
  ]
  return (
    <div className="flex h-[27px] items-center pt-px text-[#b0b0b0]">
      <time className="w-[211px] pl-[7px] text-[11px] leading-4 text-[#2d8ceb]">2:01.575</time>
      <div className="flex w-[188px] justify-between">
        {transport.map(([label, icon, color]) => (
          <button key={label} aria-label={label} className={color}>
            <Icon>{icon}</Icon>
          </button>
        ))}
      </div>
      <div className="mr-[15px] ml-auto flex w-[188px] justify-between">
        {zoom.map(([label, icon]) => (
          <button key={label} aria-label={label}>
            <Icon>{icon}</Icon>
          </button>
        ))}
      </div>
    </div>
  )
}

function Editor() {
  return (
    <section className="flex min-w-0 flex-1 flex-col bg-[#232323]">
      <div className="mb-[6px] ml-[5px]">
        <Tabs active="Editor: Tech Talk Podcast.sesx *" others={["Mixer"]} />
      </div>
      <Overview />
      <div className="mt-3 mr-[19px] ml-[4px] flex h-[17px]">
        <TrackTools />
        <Ruler />
      </div>
      <div className="ml-[4px] flex">
        <div className="min-w-0 flex-1">
          {tracks.map((t) => (
            <div key={t.name} className="flex h-[91px] border-b-2 border-[#333335]">
              <TrackHeader track={t} />
              <div className={`relative flex-1 overflow-hidden ${t.selected ? "bg-[#4d4b4e]" : "bg-[#1e1e1e]"}`}>
                {t.clip && <ClipView clip={t.clip} />}
              </div>
            </div>
          ))}
        </div>
        <TrackNavigator />
      </div>
      <Transport />
    </section>
  )
}

const tags = [
  {
    name: "Dialogue",
    icon: <path d="M0.5 1h10v6.5H6L3.5 10.5v-3h-3z" fill="currentColor" stroke="none" />,
  },
  {
    name: "Music",
    icon: (
      <>
        <path d="M4 8.5V1.5l5.5 1v6.5" strokeWidth="1.4" />
        <ellipse cx="2.8" cy="8.5" rx="2" ry="1.5" fill="currentColor" stroke="none" />
        <ellipse cx="8.3" cy="9.2" rx="2" ry="1.5" fill="currentColor" stroke="none" />
      </>
    ),
  },
  {
    name: "SFX",
    disabled: true,
    icon: <path d="M6 1l.8 2.7L9.5 2 8.3 4.5l3.2.8-3.2 1L9.5 9 6.8 7.5 6 10 5.2 7.5 2.5 9l1.2-2.7-3.2-1 3.2-.8L2.5 2l2.7 1.7z" fill="currentColor" stroke="none" />,
  },
  {
    name: "Ambience",
    disabled: true,
    icon: (
      <>
        <path d="M10.5 1.5Q4 4 4.5 9.5q5 .5 6-8zM3.5 11L9 4.5" fill="currentColor" strokeWidth="0.8" />
        <path d="M0.5 5q0-4 4-4M2.5 5.5q0-2.5 2.5-2.5" />
      </>
    ),
  },
]

function EssentialSound() {
  return (
    <aside className="w-[145px] overflow-hidden bg-[#232323] whitespace-nowrap">
      <div className="flex h-[19px] items-center gap-[5px] border-b border-[#2e2e2e] pl-[7px] text-[#c8c8c8]">
        Essential Sound
        <PanelMenu className="text-[#9a9a9a]" />
      </div>
      <p className="flex h-[21px] items-center border-b border-[#2e2e2e] pl-[6px] italic">No Selection</p>
      <label className="flex h-[23px] items-center border-b border-[#2e2e2e] pl-[6px] text-[#4c4c4c]">
        <span className="w-[26px]">Preset:</span>
        <select disabled className="h-[13px] flex-1 appearance-none bg-[#282828]" />
      </label>
      <div className="h-[21px] border-b border-[#2a2a2a]" />
      <div className="pt-[13px] pl-3">
        <p className="leading-3">Select clips with Tag:</p>
        <div className="mt-[5px] flex flex-col gap-[6px]">
          {tags.map((t) => (
            <button
              key={t.name}
              disabled={t.disabled}
              className={
                t.disabled
                  ? "flex h-[21px] w-[200px] items-center gap-[3px] rounded-sm border border-[#2c2c2c] pl-[80px] text-[#4a4a4a]"
                  : "flex h-[20px] w-[200px] items-center gap-[3px] rounded-sm border border-[#2e2e2e] bg-[#1d1d1d] pl-[80px] text-[#b4b4b4]"
              }
            >
              <Icon className={t.disabled ? "text-[#4a4a4a]" : "text-[#cfcfcf]"}>{t.icon}</Icon>
              {t.name}
            </button>
          ))}
        </div>
      </div>
    </aside>
  )
}

const dbMarks = Array.from({ length: 21 }, (_, i) => i * 3 - 60)

function Levels() {
  return (
    <section className="flex min-w-0 flex-1 flex-col bg-[#232323]">
      <h2 className="flex h-4 items-center gap-[5px] pl-[7px] text-[#b8b8b8]">
        Levels
        <PanelMenu className="text-[#9a9a9a]" />
      </h2>
      <div className="mt-1 mr-1 ml-[3px] flex h-[38px] border border-[#121212] bg-[#1f1f1f]">
        <div className="flex-1 border-l-2 border-[#8f8320]" />
        <div className="w-[7px] border-l border-[#121212]" />
      </div>
      <div className="mr-[12px] ml-[5px] flex justify-between text-[6px] text-[#8c8c8c]">
        {dbMarks.map((db) => (
          <div key={db} className="flex w-0 flex-col items-center">
            <span className="h-[3px] w-px bg-[#7a7a7a]" />
            <span className="leading-[11px]">{db === -60 ? "dB" : db}</span>
          </div>
        ))}
      </div>
    </section>
  )
}

function SelectionView() {
  return (
    <section className="w-[116px] bg-[#232323] pl-[6px] whitespace-nowrap">
      <h2 className="flex h-4 items-center gap-[5px] text-[#b8b8b8]">
        Selection/View
        <PanelMenu className="text-[#9a9a9a]" />
      </h2>
      <table className="mt-px w-full table-fixed text-left">
        <thead>
          <tr className="h-[13px]">
            <td className="w-[34px] p-0" />
            <th className="w-[47px] p-0 font-normal">Start</th>
            <th className="p-0 font-normal">End</th>
          </tr>
        </thead>
        <tbody>
          <tr className="h-[14px]">
            <th className="p-0 font-normal">Selection</th>
            <td className="p-0 text-[#2d8ceb]">2:01.575</td>
            <td className="p-0 text-[#2d8ceb]">2:01.575</td>
          </tr>
          <tr className="h-[14px]">
            <th className="p-0 font-normal">View</th>
            <td className="p-0 text-[#2d8ceb]">0:00.000</td>
            <td className="p-0 text-[#2d8ceb]">1:31.042</td>
          </tr>
        </tbody>
      </table>
    </section>
  )
}

export default function App() {
  return (
    <div className="relative flex min-h-screen flex-col overflow-hidden bg-[#161616] font-['Noto_Sans_CJK_SC',sans-serif] text-[7px] leading-[10px] text-[#a0a0a0]">
      <TitleBar />
      <Toolbar />
      <main className="mt-[2px] mb-[2px] flex flex-1 gap-[3px]">
        <div className="flex w-[317px] shrink-0 flex-col gap-[3px]">
          <FilesPanel />
          <MediaBrowser />
          <HistoryPanel />
        </div>
        <div className="flex min-w-0 flex-1 flex-col gap-[3px]">
          <div className="flex gap-[3px]">
            <Editor />
            <EssentialSound />
          </div>
          <div className="flex flex-1 gap-[3px]">
            <Levels />
            <SelectionView />
          </div>
        </div>
      </main>
      <svg width="12" height="20" viewBox="0 0 12 20" className="absolute top-[475px] right-[55px]" aria-hidden="true">
        <path d="M0.5 1v15l3.5-3 2.3 5.5 2.5-1L6.5 12h4.5z" fill="white" stroke="#222" strokeWidth="0.5" />
      </svg>
      <a
        href="#"
        className="absolute bottom-[10px] left-1/2 flex h-[36px] w-[324px] -translate-x-1/2 items-center justify-center rounded-full bg-[#585858] font-['Noto_Sans',sans-serif] text-[27px] leading-9 whitespace-nowrap text-white"
      >
        www.filesprogramas.com
      </a>
    </div>
  )
}
